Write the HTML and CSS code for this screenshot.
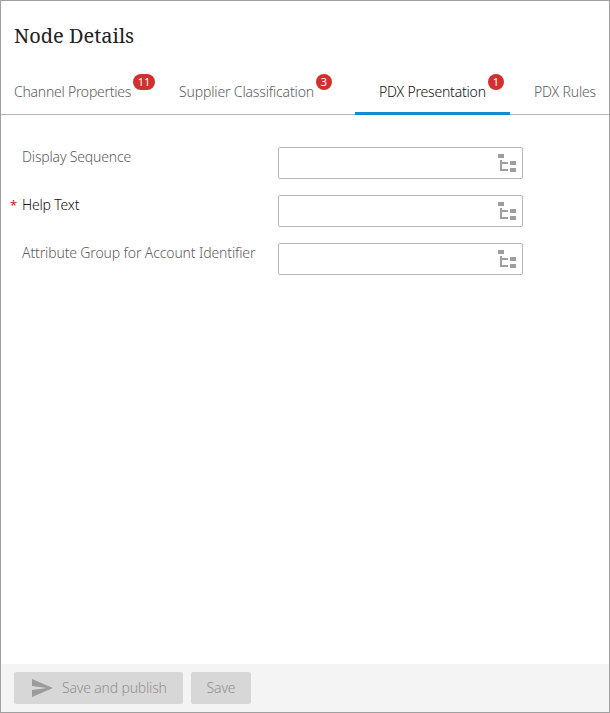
FILE: index.html
```html
<!DOCTYPE html>
<html lang="en">
<head>
<meta charset="utf-8">
<title>Node Details</title>
<link rel="stylesheet" href="styles.css">
</head>
<body>
<svg class="defs" width="0" height="0" aria-hidden="true">
  <symbol id="tree" viewBox="0 0 18 18"><path d="M0 0h6v4H0zM12 7h6v4h-6zM12 14h6v4h-6zM2 6h2v2h6v2H4v5h6v2H2z"/></symbol>
</svg>
<main class="panel">
  <h1 class="title">Node Details</h1>
  <nav class="tabs">
    <a class="tab tab-channel"><span class="t1">Channel Properties</span><b class="badge wide">11</b></a>
    <a class="tab tab-supplier"><span class="t2">Supplier Classification</span><b class="badge">3</b></a>
    <a class="tab tab-presentation active"><span class="t3">PDX Presentation</span><b class="badge">1</b></a>
    <a class="tab tab-rules"><span class="t4">PDX Rules</span></a>
  </nav>
  <form class="form">
    <div class="row"><span class="req"></span><label class="l1">Display Sequence</label><div class="field"><svg class="tree"><use href="#tree"/></svg></div></div>
    <div class="row required"><span class="req">*</span><label class="l2">Help Text</label><div class="field"><svg class="tree"><use href="#tree"/></svg></div></div>
    <div class="row"><span class="req"></span><label class="l3">Attribute Group for Account Identifier</label><div class="field"><svg class="tree"><use href="#tree"/></svg></div></div>
  </form>
  <footer class="footer">
    <button class="btn publish" disabled><svg class="send" viewBox="0 0 21 18"><path d="M0 0 21 9 0 18V11L15 9 0 7z"/></svg><span>Save and publish</span></button>
    <button class="btn save" disabled><span>Save</span></button>
  </footer>
</main>
</body>
</html>
```
FILE: styles.css
```css
* { box-sizing: border-box; }
body { margin: 0; font: 300 14px/20px "Noto Sans", "Open Sans", sans-serif; letter-spacing: -0.17px; color: #5c5c5c; background: #fff; }
.defs { position: absolute; }
.panel { height: 713px; border: 1px solid #a0a0a0; display: flex; flex-direction: column; overflow: hidden; }
.title { margin: 0; padding: 20px 13px 0; height: 68px; font: 400 20px/30px "Noto Serif", "DejaVu Serif Condensed", "DejaVu Serif", serif; letter-spacing: 0; color: #222; white-space: nowrap; }
.tabs { display: flex; height: 46px; border-bottom: 1px solid #b4b4b4; }
.tab { display: flex; flex: none; gap: 2px; height: 46px; padding: 13px 0 0 24px; white-space: nowrap; }
.tab-channel { width: 154px; padding-left: 13px; }
.tab-supplier { width: 200px; }
.tab-presentation { width: 155px; }
.tab-rules { width: 99px; }
.t1 { width: 117px; letter-spacing: -0.25px; }
.t2 { width: 135px; letter-spacing: -0.15px; }
.t3 { width: 107px; letter-spacing: -0.2px; }
.l3 { letter-spacing: -0.13px; }
.active { color: #111; border-bottom: 3px solid #178ccb; }
.badge { flex: none; width: 16px; height: 16px; margin-top: -8px; border-radius: 8px; background: #d32f2f; color: #fff; font-size: 11px; font-weight: 400; letter-spacing: 0; line-height: 16px; text-align: center; }
.wide { width: 22px; }
.form { flex: 1; padding-top: 32px; display: flex; flex-direction: column; gap: 16px; }
.row { display: grid; grid-template-columns: 12px 256px 245px; padding-left: 9px; height: 32px; }
.row label { white-space: nowrap; }
.req { color: #d32f2f; font-size: 13px; font-weight: 500; }
.required label { color: #111; }
.field { display: flex; justify-content: flex-end; padding: 6px 6px 0 0; border: 1px solid #b8b8b8; border-radius: 2px; }
.tree { width: 18px; height: 18px; fill: #9e9e9e; shape-rendering: crispEdges; }
.footer { height: 48px; padding: 8px 13px; display: flex; gap: 8px; background: #f4f4f4; }
.btn { display: flex; align-items: center; padding: 0; height: 32px; border: 0; border-radius: 2px; background: #d7d7d7; color: #929292; font: inherit; letter-spacing: inherit; white-space: nowrap; }
.publish { width: 169px; padding-left: 18px; gap: 9px; }
.save { width: 60px; justify-content: center; }
.send { width: 21px; height: 18px; fill: #9c9c9c; }
```
